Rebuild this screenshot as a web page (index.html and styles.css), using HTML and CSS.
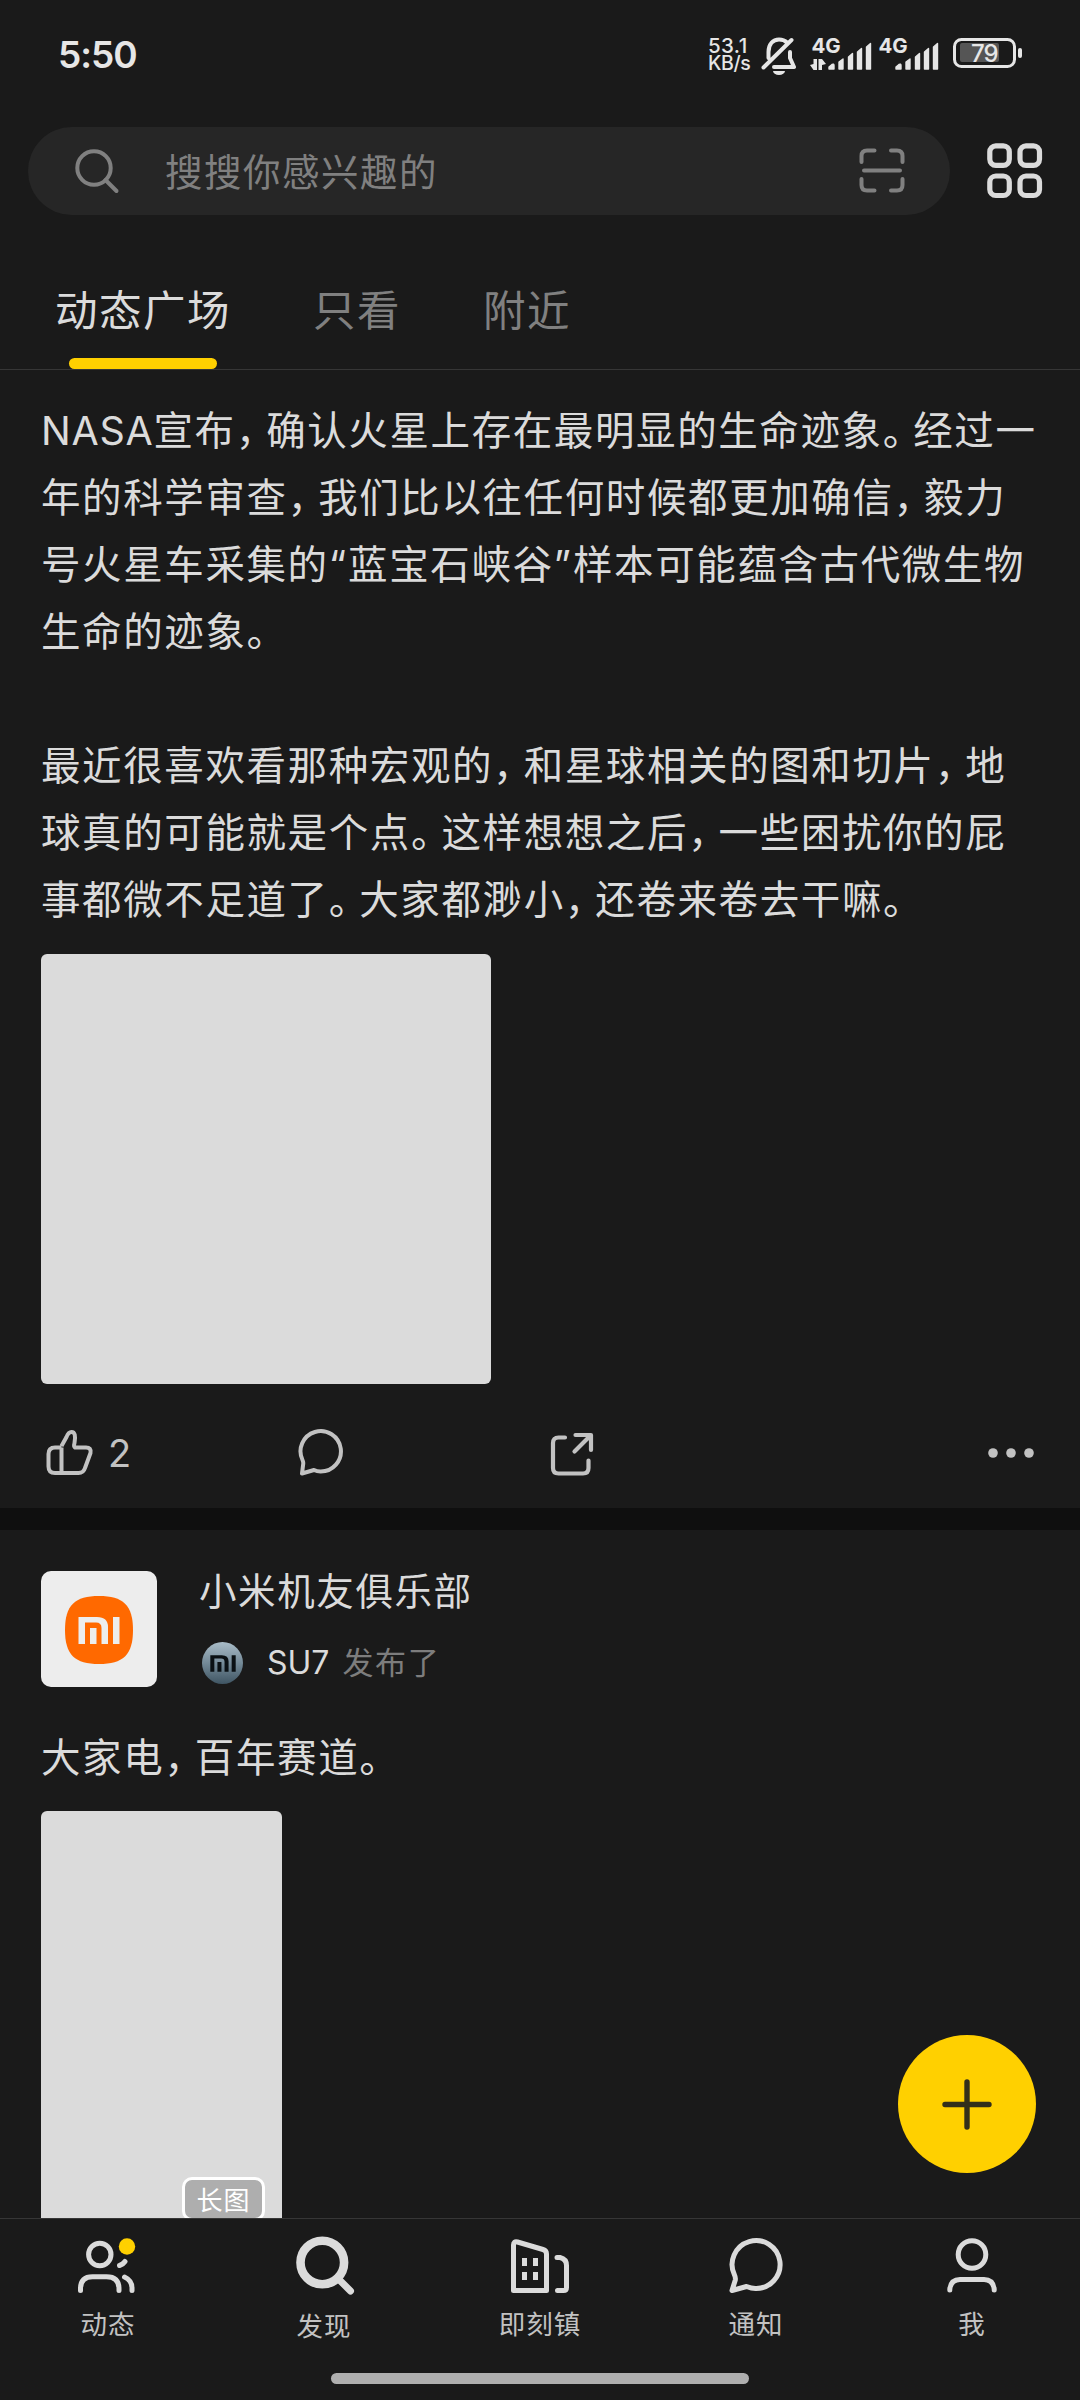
FILE: index.html
```html
<!DOCTYPE html>
<html lang="zh-CN">
<head>
<meta charset="utf-8">
<title>动态广场</title>
<link rel="stylesheet" href="styles.css">
</head>
<body>
<div class="screen">
  <header class="status">
    <span class="clock">5:50</span>
    <div class="speed"><span class="rate">53.1</span><span>KB/s</span></div>
    <svg class="bell" width="36" height="40" viewBox="0 0 36 40" fill="none" stroke="#e6e6e6" stroke-width="4" stroke-linecap="round" stroke-linejoin="round">
      <path d="M7.500 21V15C7.500 7 12 2.500 18 2.500c3 0 6 1 8 3M29 15v6l4 9H13M2.500 30.500L30.500 3"/>
      <path d="M12 34h12a6 4 0 0 1-12 0z" fill="#e6e6e6" stroke="none"/>
    </svg>
    <svg class="signal" width="64" height="36" viewBox="0 0 64 36" fill="#e6e6e6">
      <text x="1.500" y="16.200" class="net">4G</text>
      <path d="M0 28l3.500-1V22H7v11H3.500zM8.500 22H12l4 5-4 1v5H8.500z"/>
      <path d="M19 30l3-2.500q2-1 2 1V32h-5zM29 25l4-3v10h-4zM38.500 20l4-3.500V32h-4zM47.500 15l4-3.500V32h-4zM56.500 10l4-3.500V32h-4z" stroke="#e6e6e6" stroke-width="1.400" stroke-linejoin="round"/>
    </svg>
    <svg class="signal2" width="64" height="36" viewBox="0 0 64 36" fill="#e6e6e6">
      <text x="1.500" y="16.200" class="net">4G</text>
      <path d="M19 30l3-2.500q2-1 2 1V32h-5zM29 25l4-3v10h-4zM38.500 20l4-3.500V32h-4zM47.500 15l4-3.500V32h-4zM56.500 10l4-3.500V32h-4z" stroke="#e6e6e6" stroke-width="1.400" stroke-linejoin="round"/>
    </svg>
    <svg class="battery" width="70" height="32" viewBox="0 0 70 32">
      <rect x="1.500" y="2.500" width="60" height="27" rx="7" fill="none" stroke="#e6e6e6" stroke-width="3"/>
      <rect x="7" y="6" width="39" height="19" rx="2" fill="#555"/>
      <rect x="65" y="11" width="4" height="10" rx="2" fill="#e6e6e6"/>
      <text x="18" y="24.500" class="level">79</text>
    </svg>
  </header>

  <div class="top">
    <div class="search">
      <svg width="46" height="46" viewBox="0 0 46 46" fill="none" stroke="#808080" stroke-width="4" stroke-linecap="round"><circle cx="19" cy="20" r="16.700"/><path d="M30.500 32L41.500 43"/></svg>
      <span class="hint">搜搜你感兴趣的</span>
      <svg width="46" height="46" viewBox="0 0 46 46" fill="none" stroke="#808080" stroke-width="4" stroke-linecap="round"><path d="M2.500 14V8q0-5.500 5.500-5.500h7.500M32 2.500h6q5.500 0 5.500 5.500v6M43.500 31v6q0 5.500-5.500 5.500h-6M15.500 42.500H8q-5.500 0-5.500-5.500v-6M5 22.500h36"/></svg>
    </div>
    <svg class="grid" width="56" height="56" viewBox="0 0 56 56" fill="none" stroke="#dbdbdb" stroke-width="5.200"><rect x="2.800" y="2.800" width="19.500" height="19.500" rx="6"/><rect x="33" y="2.800" width="19.500" height="19.500" rx="6"/><rect x="2.800" y="33" width="19.500" height="19.500" rx="6"/><rect x="33" y="33" width="19.500" height="19.500" rx="6"/></svg>
  </div>

  <nav class="tabs">
    <span class="tab active">动态广场</span>
    <span class="tab">只看</span>
    <span class="tab">附近</span>
  </nav>

  <main class="feed">
    <article class="post first">
      <p class="text"><span class="latin">NASA</span>宣布<i>，</i>确认火星上存在最明显的生命迹象<i>。</i>经过一<br>年的科学审查<i>，</i>我们比以往任何时候都更加确信<i>，</i>毅力<br>号火星车采集的<b>“</b>蓝宝石峡谷<b>”</b>样本可能蕴含古代微生物<br>生命的迹象<i>。</i><br><br>最近很喜欢看那种宏观的<i>，</i>和星球相关的图和切片<i>，</i>地<br>球真的可能就是个点<i>。</i>这样想想之后<i>，</i>一些困扰你的屁<br>事都微不足道了<i>。</i>大家都渺小<i>，</i>还卷来卷去干嘛<i>。</i></p>
      <div class="photo square"></div>
      <div class="actions">
        <span class="action">
          <svg width="52" height="50" viewBox="0 0 52 50" fill="none" stroke="#c2c2c2" stroke-width="4" stroke-linejoin="round"><path d="M17.500 19.500V45M17.500 19.500H11q-6.500 0-6.500 6.500v12.500Q4.500 45 11 45h23.500q5 0 6.500-5l5.500-15q1-5.500-4.500-5.500H31q-1.500-1-.5-4.500 2-11-3-11-3 0-5 5L17.500 18"/></svg>
          <span class="count">2</span>
        </span>
        <span class="action">
          <svg width="52" height="50" viewBox="0 0 52 50" fill="none" stroke="#c2c2c2" stroke-width="4" stroke-linejoin="round"><path d="M6 45.500l12-3.500c2 1 4 1.500 6.500 1.500a20.200 20.200 0 1 0-18-11.500q1 2 .7 4z"/></svg>
        </span>
        <span class="action">
          <svg width="52" height="50" viewBox="0 0 52 50" fill="none" stroke="#c2c2c2" stroke-width="4.200" stroke-linecap="round" stroke-linejoin="round"><path d="M17 9.500h-6.500Q5 9.500 5 15v25q0 5.500 5.500 5.500H35q5.500 0 5.500-5.500v-7.500M27.500 7H43v15M42 8L26.500 23.500"/></svg>
        </span>
        <svg class="more" width="48" height="12" viewBox="0 0 48 12" fill="#c2c2c2"><circle cx="6" cy="6" r="4.800"/><circle cx="24" cy="6" r="4.800"/><circle cx="42" cy="6" r="4.800"/></svg>
      </div>
    </article>

    <article class="post second">
      <div class="head">
        <div class="avatar">
          <svg width="68" height="68" viewBox="0 0 68 68"><path d="M34 0C58 0 68 9 68 34S58 68 34 68 0 59 0 34 10 0 34 0z" fill="#ff6900"/><path d="M13.500 48V21H32q11 0 11 10v17h-6.500V32q0-5.500-5.500-5.500H20V48zM25 32h6.500v16H25zM48 21h6.500v27H48z" fill="#ededed"/></svg>
        </div>
        <div class="who">
          <div class="name">小米机友俱乐部</div>
          <div class="by">
            <span class="mini"><svg width="26" height="17" viewBox="13 21 42 27"><path d="M13.500 48V21H32q11 0 11 10v17h-6.500V32q0-5.500-5.500-5.500H20V48zM25 32h6.500v16H25zM48 21h6.500v27H48z" fill="#0a1014"/></svg></span>
            <span class="user">SU7</span><span class="did">发布了</span>
          </div>
        </div>
      </div>
      <p class="text">大家电<i>，</i>百年赛道<i>。</i></p>
      <div class="photo tall"><span class="tag">长图</span></div>
    </article>
  </main>

  <button class="fab" aria-label="发布"><svg width="52" height="52" viewBox="0 0 52 52" stroke="#332f1a" stroke-width="5.400" stroke-linecap="round"><path d="M4 26.500h44M26 4v45"/></svg></button>

  <footer class="bottom">
    <div class="item">
      <svg width="60" height="60" viewBox="0 0 60 60" fill="none" stroke="#dbdbdb" stroke-width="5" stroke-linecap="round"><circle cx="21.800" cy="19.500" r="11.200"/><path d="M2.500 55.500v-1.800q0-12 12-12h14q12.500 0 12.500 12v1.800M41.500 30.500q3.500-1 5.500-4M46.500 42q7.500 3.500 7.500 11v2.500"/><circle cx="49" cy="11.500" r="8.200" fill="#ffd000" stroke="none"/></svg>
      <span>动态</span>
    </div>
    <div class="item current">
      <svg width="62" height="60" viewBox="0 0 62 60" fill="none" stroke="#dbdbdb" stroke-linecap="round"><circle cx="29.300" cy="27.500" r="21.800" stroke-width="8.600"/><path d="M45 43.500L57.500 56" stroke-width="7"/></svg>
      <span>发现</span>
    </div>
    <div class="item">
      <svg width="60" height="60" viewBox="0 0 60 60" fill="none" stroke="#dbdbdb" stroke-width="5" stroke-linecap="round" stroke-linejoin="round"><path d="M3.500 55.500V10q0-4 4-3l25.500 7.500q3.500 1 3.500 4.500v36.500zM47 22.500h3q6.500 1.500 6.500 8v22q0 3-3 3H47.500"/><path d="M12 23h5v8h-5zM23 23h5v8h-5zM12 37h5v8h-5zM23 37h5v8h-5z" fill="#dbdbdb" stroke="none"/></svg>
      <span>即刻镇</span>
    </div>
    <div class="item">
      <svg width="60" height="60" viewBox="0 0 60 60" fill="none" stroke="#dbdbdb" stroke-width="5" stroke-linejoin="round"><path d="M6 55.500l14.500-4c3 1.200 5.500 2 9 2a24 24 0 1 0-21-13.500q1.200 2.500.8 5z"/></svg>
      <span>通知</span>
    </div>
    <div class="item">
      <svg width="60" height="60" viewBox="0 0 60 60" fill="none" stroke="#dbdbdb" stroke-width="5" stroke-linecap="round"><circle cx="30" cy="19.500" r="13.800"/><path d="M7.800 55v-1Q9 44.500 18 44.500h24q9 0 10.200 9.500v1"/></svg>
      <span>我</span>
    </div>
  </footer>
  <div class="home"></div>
</div>
</body>
</html>
```

FILE: styles.css
```css
* { box-sizing: border-box; }

body {
  margin: 0;
  background: #1a1a1a;
  color: #dbdbdb;
  font-family: Inter, "Noto Sans CJK SC", sans-serif;
}

svg { display: block; flex: none; }

.screen {
  position: relative;
  display: flex;
  flex-direction: column;
  width: 1080px;
  height: 2400px;
  overflow: hidden;
  background: #1a1a1a;
}

.status {
  display: flex;
  align-items: flex-start;
  height: 127px;
  padding: 37px 57px 0 58px;
  color: #e6e6e6;
}

.clock {
  margin-right: auto;
  font-size: 37px;
  font-weight: 600;
  line-height: 36px;
  letter-spacing: -1px;
}

.speed {
  display: flex;
  flex-direction: column;
  width: 45px;
  margin-right: 8px;
  font-size: 19.500px;
  font-weight: 500;
  line-height: 18px;
  letter-spacing: -0.4px;
  white-space: nowrap;
}

.rate { font-size: 20.500px; letter-spacing: 0.4px; line-height: 17px; }

.signal { margin-left: 13px; }
.signal2 { margin-left: 3px; }
.battery { margin-left: 12px; }
.net { font-size: 20.500px; font-weight: 700; }
.level { fill: #e6e6e6; font-size: 24px; font-weight: 500; letter-spacing: -1px; }

.top {
  display: flex;
  align-items: center;
  height: 88px;
  padding: 0 37px 0 28px;
}

.search {
  display: flex;
  align-items: center;
  flex: none;
  width: 922px;
  height: 88px;
  padding: 0 45px 0 47px;
  border-radius: 44px;
  background: #262626;
}

.hint {
  flex: 1;
  margin: 3px 0 0 44px;
  color: #808080;
  font-size: 37.500px;
  line-height: 60px;
  letter-spacing: 1.500px;
}

.grid { margin-left: 37px; }

.tabs {
  display: flex;
  gap: 82px;
  height: 155px;
  padding: 61px 0 0 55px;
  border-bottom: 1px solid #363636;
}

.tab {
  display: flex;
  flex-direction: column;
  align-items: center;
  color: #808080;
  font-size: 42.500px;
  line-height: 70px;
  letter-spacing: 1.500px;
}

.tab.active { color: #dbdbdb; }

.tab.active::after {
  content: "";
  width: 148px;
  height: 11px;
  margin-top: 12px;
  border-radius: 6px;
  background: #ffd000;
}

.feed {
  flex: none;
  height: 1848px;
  overflow: hidden;
}

.post { padding: 0 41px; }

.post.first {
  height: 1160px;
  padding-top: 28px;
  border-bottom: 22px solid #0f0f0f;
}

.text {
  margin: 0;
  font-size: 39.500px;
  line-height: 67px;
  letter-spacing: 1.600px;
  white-space: nowrap;
}

.latin { letter-spacing: 0.700px; }

/* compact punctuation */
.text i {
  margin-right: 9.200px;
  font-style: normal;
  font-feature-settings: "halt";
}
.text b { font-weight: 400; letter-spacing: 2px; }

.photo {
  border-radius: 6px;
  background: #dbdbdb;
}

.square { width: 450px; height: 430px; margin-top: 20px; }

.actions {
  display: flex;
  align-items: center;
  height: 50px;
  margin-top: 44px;
  color: #c2c2c2;
}

.action { display: flex; align-items: center; width: 252px; }
.action svg { margin-left: 3px; }
.count { margin-left: 12px; font-size: 38px; line-height: 50px; }
.more { margin: 0 4px 0 auto; }

.post.second { padding-top: 41px; }

.head { display: flex; gap: 42px; height: 116px; }

.avatar {
  display: grid;
  place-items: center;
  width: 116px;
  height: 116px;
  padding-top: 2px;
  border-radius: 10px;
  background: #ededed;
}

.name {
  height: 38px;
  font-size: 37.500px;
  line-height: 41px;
  letter-spacing: 1.600px;
}

.by { display: flex; align-items: center; height: 42px; margin-top: 33px; padding-left: 3px; }

.mini {
  display: grid;
  place-items: center;
  width: 41px;
  height: 42px;
  border-radius: 50%;
  background: linear-gradient(#a9bcc8, #6f8593 55%, #3f5563);
}

.user { margin-left: 24px; font-size: 32px; line-height: 42px; }
.did { margin-left: 13px; color: #7d7d7d; font-size: 31px; line-height: 42px; letter-spacing: 1.600px; }

.second .text { margin-top: 38px; }

.tall {
  display: flex;
  align-items: flex-end;
  justify-content: flex-end;
  width: 241px;
  height: 428px;
  margin-top: 19px;
  padding: 0 17px 18px 0;
}

.tag {
  width: 83px;
  height: 44px;
  border: 3px solid #fff;
  border-radius: 10px;
  background: #aeaeae;
  color: #fff;
  font-size: 26px;
  line-height: 42px;
  text-align: center;
  letter-spacing: 1px;
}

.fab {
  position: absolute;
  left: 898px;
  top: 2035px;
  display: grid;
  place-items: center;
  width: 138px;
  height: 138px;
  padding: 0;
  border: 0;
  border-radius: 50%;
  background: #ffd000;
}

.bottom {
  display: grid;
  grid-template-columns: repeat(5, 216px);
  height: 155px;
  border-top: 1px solid #363636;
}

.item {
  display: flex;
  flex-direction: column;
  align-items: center;
  padding-top: 16px;
  color: #c2c2c2;
  font-size: 26.500px;
  line-height: 40px;
  letter-spacing: 1px;
}

.item span { margin-top: 9px; }
.item.current span { margin-top: 11px; }

.home {
  width: 418px;
  height: 11px;
  margin: 0 auto;
  border-radius: 6px;
  background: #afafaf;
}
```
